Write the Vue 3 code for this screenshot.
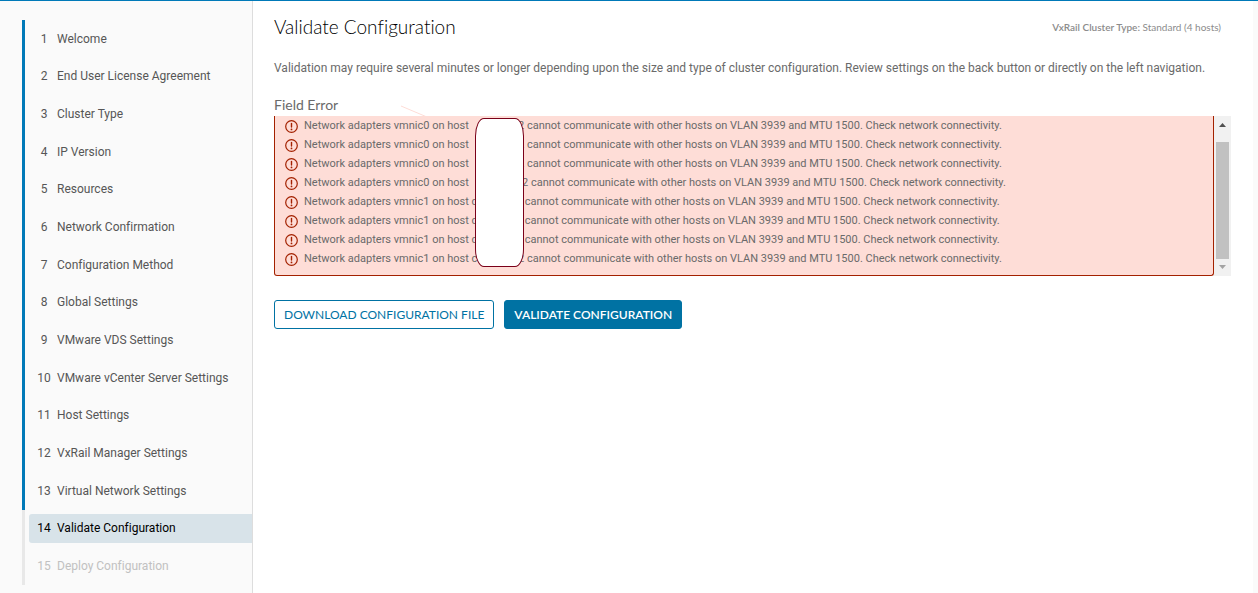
<script setup>
const steps = [
  'Welcome',
  'End User License Agreement',
  'Cluster Type',
  'IP Version',
  'Resources',
  'Network Confirmation',
  'Configuration Method',
  'Global Settings',
  'VMware VDS Settings',
  'VMware vCenter Server Settings',
  'Host Settings',
  'VxRail Manager Settings',
  'Virtual Network Settings',
  'Validate Configuration',
  'Deploy Configuration',
]
const current = 14

const tail = 'cannot communicate with other hosts on VLAN 3939 and MTU 1500. Check network connectivity.'
const errors = [
  { nic: 'vmnic0', host: '', end: '2' },
  { nic: 'vmnic0', host: '', end: '2' },
  { nic: 'vmnic0', host: '', end: '2' },
  { nic: 'vmnic0', host: '', end: '2', wide: true },
  { nic: 'vmnic1', host: 'c', end: '' },
  { nic: 'vmnic1', host: 'c', end: '' },
  { nic: 'vmnic1', host: 'c', end: '' },
  { nic: 'vmnic1', host: 'c', end: '2' },
]
</script>

<template>
  <div class="wizard">
    <nav class="sidebar" aria-label="Wizard steps">
      <ol class="steps">
        <li
          v-for="(step, i) in steps"
          :key="step"
          class="step"
          :class="{ done: i + 1 < current, active: i + 1 === current, disabled: i + 1 > current }"
        >
          <button type="button" class="step-button" :disabled="i + 1 > current">
            <span class="step-number">{{ i + 1 }}</span>
            <span>{{ step }}</span>
          </button>
        </li>
      </ol>
    </nav>

    <main class="content">
      <header class="heading">
        <h1>Validate Configuration</h1>
        <p class="cluster"><strong>VxRail Cluster Type:</strong> Standard (4 hosts)</p>
      </header>
      <p class="intro">
        Validation may require several minutes or longer depending upon the size and type of cluster configuration. Review settings on the back button or directly on the left navigation.
      </p>

      <section class="errors">
        <h2>Field Error</h2>
        <svg class="stroke" viewBox="0 0 26 12" aria-hidden="true">
          <path d="M0 1L26 12" fill="none" stroke="#feddd7" />
        </svg>
        <div class="scroller">
          <ul class="alert">
            <li v-for="(e, i) in errors" :key="i">
              <svg class="icon" viewBox="0 0 14 14" aria-hidden="true">
                <circle cx="6.500" cy="7.500" r="5.800" fill="none" stroke="#a32100" stroke-width="1.200" />
                <path d="M6.500 4.500V8" stroke="#a32100" stroke-width="1.400" stroke-linecap="round" />
                <circle cx="6.500" cy="10.400" r="0.900" fill="#a32100" />
              </svg>
              <span class="lead" :class="{ short: !e.end, wide: e.wide }">Network adapters {{ e.nic }} on host {{ e.host }}</span>
              <span>{{ e.end }} {{ tail }}</span>
            </li>
          </ul>
          <div class="scrollbar" aria-hidden="true">
            <svg viewBox="0 0 17 17"><path d="M5 11L8.500 7L12 11Z" fill="#505050" /></svg>
            <div class="thumb"></div>
            <svg viewBox="0 0 17 17"><path d="M5 6L8.500 10L12 6Z" fill="#a3a3a3" /></svg>
          </div>
          <div class="redaction"></div>
        </div>
      </section>

      <div class="actions">
        <button type="button" class="btn">DOWNLOAD CONFIGURATION FILE</button>
        <button type="button" class="btn primary">VALIDATE CONFIGURATION</button>
      </div>
    </main>
  </div>
</template>

<style>
body {
  margin: 0;
  background: #fff;
}
</style>

<style scoped>
.wizard {
  display: flex;
  box-sizing: border-box;
  min-height: 100vh;
  border-top: 1px solid #0079b8;
  font-family: Roboto, "Open Sans", sans-serif;
  font-size: 12px;
  font-variant-ligatures: none;
  color: #6a6a6a;
}
.sidebar {
  flex: 0 0 253px;
  box-sizing: border-box;
  padding: 19px 0 8px 22px;
  background: #fafafa;
  border-right: 1px solid #ddd;
}
.steps {
  display: grid;
  grid-template-rows: repeat(15, 1fr);
  height: 565px;
  margin: 0;
  padding: 0;
  list-style: none;
}
.step {
  display: flex;
  align-items: center;
  padding-left: 4px;
  border-left: 3px solid #e8e8e8;
}
.step.done {
  border-left-color: #0079b8;
}
.step-button {
  display: flex;
  flex: 1;
  align-items: center;
  gap: 6px;
  height: 29px;
  padding: 0 0 0 8px;
  border: 0;
  border-radius: 3px 0 0 3px;
  background: none;
  color: #565656;
  font: inherit;
  text-align: left;
  white-space: nowrap;
}
.step-number {
  width: 14px;
  text-align: center;
}
.active .step-button {
  background: #d8e3e9;
  color: #000;
}
.disabled .step-button {
  color: #c1c1c1;
}
.content {
  flex: 1;
  min-width: 0;
  padding: 14px 22px 0 21px;
  border-right: 5px solid #fafafa;
}
.heading {
  display: flex;
  justify-content: space-between;
  padding-right: 10px;
  font-family: Lato, "Open Sans", sans-serif;
}
h1 {
  margin: 0;
  font-size: 19px;
  font-weight: 300;
  line-height: 24px;
  color: #000;
}
.cluster {
  margin: 0;
  font-size: 10px;
  line-height: 24px;
  color: #8c8c8c;
}
.cluster strong {
  font-weight: 600;
}
.intro {
  margin: 20px 0 0;
  line-height: 18px;
  white-space: nowrap;
}
.errors {
  position: relative;
  margin-top: 19px;
}
h2 {
  margin: 0;
  padding-bottom: 2px;
  font-family: Lato, "Open Sans", sans-serif;
  font-size: 14px;
  font-weight: 400;
  line-height: 18px;
}
.stroke {
  position: absolute;
  top: 9px;
  left: 127px;
  width: 26px;
  height: 12px;
}
.scroller {
  position: relative;
  display: flex;
  height: 160px;
}
.alert {
  flex: 1;
  display: grid;
  grid-template-rows: repeat(8, 1fr);
  box-sizing: border-box;
  min-width: 0;
  margin: 0;
  padding: 0 0 7px 10px;
  border: 1px solid #a32100;
  border-top: 0;
  border-radius: 0 0 3px 3px;
  background: #feddd7;
  font-size: 11px;
  list-style: none;
}
.alert li {
  display: flex;
  align-items: center;
  white-space: pre;
  line-height: 16px;
}
.icon {
  flex: none;
  width: 14px;
  height: 14px;
  margin-right: 5px;
}
.lead {
  flex: 0 0 214px;
}
.lead.wide,
.lead.short {
  flex-basis: 218px;
}
.scrollbar {
  display: flex;
  flex-direction: column;
  width: 17px;
  background: #f1f1f1;
}
.scrollbar svg {
  width: 17px;
  height: 17px;
}
.thumb {
  height: 117px;
  margin: 9px 2px 0;
  background: #c1c1c1;
}
.redaction {
  position: absolute;
  top: 2px;
  left: 201px;
  box-sizing: border-box;
  width: 49px;
  height: 149px;
  border: 1px solid #7a0019;
  border-radius: 9px / 18px;
  background: #fff;
}
.actions {
  display: flex;
  gap: 10px;
  margin-top: 24px;
}
.btn {
  height: 29px;
  padding: 0 9px;
  border: 1px solid #0072a3;
  border-radius: 3px;
  background: #fff;
  color: #0072a3;
  font-family: Lato, "Open Sans", sans-serif;
  font-size: 12px;
  white-space: nowrap;
}
.btn.primary {
  background: #0072a3;
  color: #fff;
  font-weight: 600;
}
</style>
